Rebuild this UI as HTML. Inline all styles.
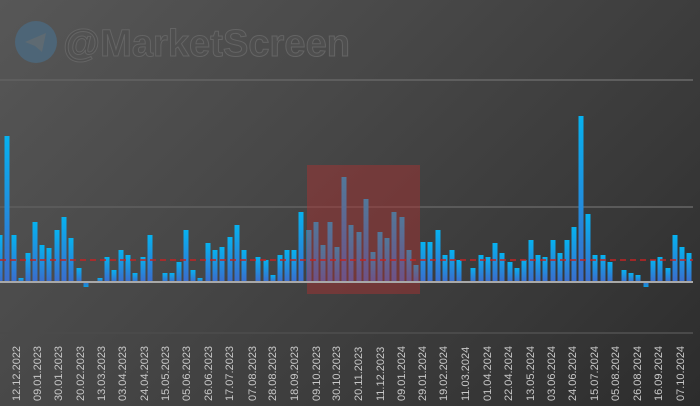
<!DOCTYPE html>
<html><head><meta charset="utf-8"><style>
html,body{margin:0;padding:0}
body{width:700px;height:406px;overflow:hidden;background:linear-gradient(135deg,#575757 0%,#474747 40%,#383838 75%,#2c2c2c 100%);position:relative;font-family:"Liberation Sans",sans-serif}
svg{position:absolute;left:0;top:0}
</style></head><body>
<svg width="700" height="406" viewBox="0 0 700 406">
<defs>
<linearGradient id="g" x1="0" y1="0" x2="0" y2="1"><stop offset="0" stop-color="#06b2f0"/><stop offset="1" stop-color="#3b6ccc"/></linearGradient>
<linearGradient id="gn" x1="0" y1="0" x2="0" y2="1"><stop offset="0" stop-color="#3b6ccc"/><stop offset="1" stop-color="#06a0e0"/></linearGradient>
</defs>
<circle cx="36" cy="42" r="21" fill="#4d6577"/>
<path d="M25 42 L46 33 L42 52 L35 46 Z" fill="#5e6a72"/>
<text x="63" y="56" font-family="Liberation Sans" font-weight="bold" font-size="38" textLength="287" fill="#4f4f4f" stroke="#646464" stroke-width="1">@MarketScreen</text>
<line x1="0" y1="80" x2="693" y2="80" stroke="#5e5e5e" stroke-width="2"/>
<line x1="0" y1="207" x2="693" y2="207" stroke="#5a5a5a" stroke-width="2"/>
<line x1="0" y1="333" x2="693" y2="333" stroke="#4a4a4a" stroke-width="2"/>
<g id="bars"></g>
<rect x="307" y="165" width="113" height="129" fill="#b03030" opacity="0.45"/>
<line x1="0" y1="282" x2="693" y2="282" stroke="#a8a8a8" stroke-width="2"/>
<line x1="0" y1="260" x2="693" y2="260" stroke="#c42222" stroke-width="1.5" stroke-dasharray="6,4"/>
<g font-family="Liberation Sans" font-size="11" fill="#c8c8c8" id="lbl">
<text transform="translate(20,401) rotate(-90)">12.12.2022</text>
<text transform="translate(41,401) rotate(-90)">09.01.2023</text>
<text transform="translate(62,401) rotate(-90)">30.01.2023</text>
<text transform="translate(84,401) rotate(-90)">20.02.2023</text>
<text transform="translate(105,401) rotate(-90)">13.03.2023</text>
<text transform="translate(126,401) rotate(-90)">03.04.2023</text>
<text transform="translate(148,401) rotate(-90)">24.04.2023</text>
<text transform="translate(169,401) rotate(-90)">15.05.2023</text>
<text transform="translate(190,401) rotate(-90)">05.06.2023</text>
<text transform="translate(212,401) rotate(-90)">26.06.2023</text>
<text transform="translate(233,401) rotate(-90)">17.07.2023</text>
<text transform="translate(256,401) rotate(-90)">07.08.2023</text>
<text transform="translate(276,401) rotate(-90)">28.08.2023</text>
<text transform="translate(298,401) rotate(-90)">18.09.2023</text>
<text transform="translate(320,401) rotate(-90)">09.10.2023</text>
<text transform="translate(340,401) rotate(-90)">30.10.2023</text>
<text transform="translate(362,401) rotate(-90)">20.11.2023</text>
<text transform="translate(384,401) rotate(-90)">11.12.2023</text>
<text transform="translate(405,401) rotate(-90)">09.01.2024</text>
<text transform="translate(426,401) rotate(-90)">29.01.2024</text>
<text transform="translate(447,401) rotate(-90)">19.02.2024</text>
<text transform="translate(469,401) rotate(-90)">11.03.2024</text>
<text transform="translate(491,401) rotate(-90)">01.04.2024</text>
<text transform="translate(512,401) rotate(-90)">22.04.2024</text>
<text transform="translate(534,401) rotate(-90)">13.05.2024</text>
<text transform="translate(555,401) rotate(-90)">03.06.2024</text>
<text transform="translate(576,401) rotate(-90)">24.06.2024</text>
<text transform="translate(598,401) rotate(-90)">15.07.2024</text>
<text transform="translate(619,401) rotate(-90)">05.08.2024</text>
<text transform="translate(641,401) rotate(-90)">26.08.2024</text>
<text transform="translate(662,401) rotate(-90)">16.09.2024</text>
<text transform="translate(684,401) rotate(-90)">07.10.2024</text>
</g>
</svg>
<script>
var d=[[0,235],[7,136],[14,235],[21,278],[28,253],[35,222],[42,245],[49,248],[57,230],[64,217],[71,238],[79,268],[86,-287],[100,278],[107,257],[114,270],[121,250],[128,255],[135,273],[143,257],[150,235],[165,273],[172,273],[179,262],[186,230],[193,270],[200,278],[208,243],[215,250],[222,247],[230,237],[237,225],[244,250],[251,281],[258,257],[266,260],[273,275],[280,255],[287,250],[294,250],[301,212],[309,230],[316,222],[323,245],[330,222],[337,247],[344,177],[351,225],[359,232],[366,199],[373,252],[380,232],[387,238],[394,212],[402,217],[409,250],[416,265],[423,242],[430,242],[438,230],[445,255],[452,250],[459,260],[473,268],[481,255],[488,257],[495,243],[502,253],[510,262],[517,268],[524,260],[531,240],[538,255],[545,257],[553,240],[560,253],[567,240],[574,227],[581,116],[588,214],[595,255],[603,255],[610,262],[624,270],[631,273],[638,275],[646,-287],[653,260],[660,257],[668,268],[675,235],[682,247],[689,253]];
var g=document.getElementById('bars'),s='';
d.forEach(function(b){var x=b[0]-2.5;if(b[1]<0){s+='<rect x="'+x+'" y="282" width="5" height="'+(-b[1]-282)+'" fill="url(#gn)"/>';}else{s+='<rect x="'+x+'" y="'+b[1]+'" width="5" height="'+(282-b[1])+'" fill="url(#g)"/>';}});
g.innerHTML=s;
</script>
</body></html>
